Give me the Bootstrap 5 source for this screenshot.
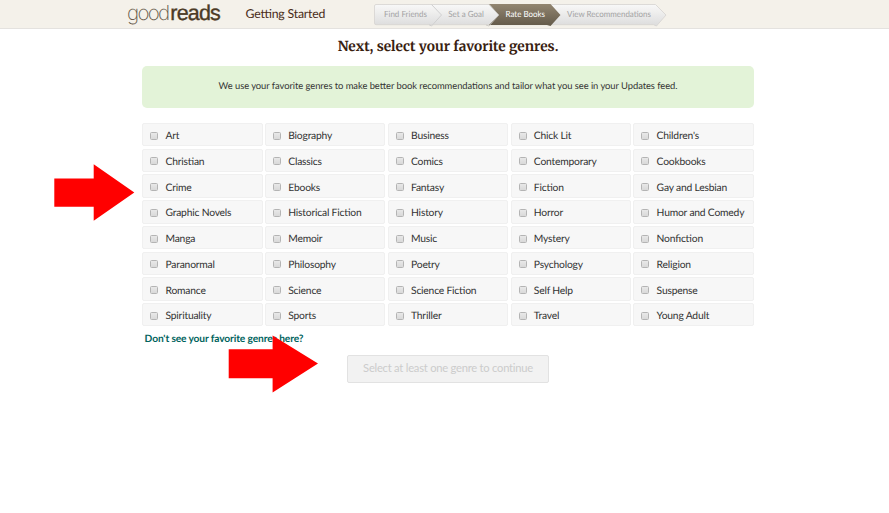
<!DOCTYPE html>
<html lang="en">
<head>
<meta charset="utf-8">
<title>Goodreads - Getting Started</title>
<meta name="viewport" content="width=device-width, initial-scale=1">
<link href="https://cdn.jsdelivr.net/npm/bootstrap@5.3.0/dist/css/bootstrap.min.css" rel="stylesheet">
<style>
body{font-family:Lato,"Liberation Sans",sans-serif;color:#333;font-size:10.3px;min-height:513px;overflow:hidden;text-rendering:geometricPrecision;font-feature-settings:"liga" 1}
.topbar{height:29px;background:#f4f1ea;border-bottom:1px solid #e4e2df;padding-left:127px}
.topbar svg{flex:none;display:block;opacity:.99}
.section-title{font-size:12.3px;line-height:28px;color:#4a2c18;width:118px;margin-left:18.5px;letter-spacing:-.2px}
.steps{margin-left:8.5px}
.wrap{width:611.5px;margin-left:142.3px}
.headline{font-family:Merriweather,"DejaVu Serif Condensed","DejaVu Serif",serif;font-weight:700;font-size:13.7px;line-height:20px;color:#382110;margin:8px 0 8.5px}
.notice{height:42px;background:#e3f3d8;border-radius:5px;font-size:9.4px;letter-spacing:-.05px;padding-top:1px}
.genres{display:grid;grid-template-columns:repeat(5,1fr);gap:2.3px 2.4px;margin-top:15.5px}
.genre{height:23.42px;background:#f7f7f7;border:1px solid #f0f0f0;border-radius:2px;padding-left:7px;cursor:pointer;white-space:nowrap;letter-spacing:-.2px}
.genre span{padding-top:4.6px}
.genre input{appearance:none;width:8px;height:8px;margin:2px 7.2px 0 0;border:1px solid #b4b4b4;border-radius:1.5px;background:linear-gradient(#e8e8e8,#d9d9d9);flex:none}
.more{font-size:10.2px;line-height:14px;color:#00635d;margin:5.5px 0 0 2.3px;font-weight:700;letter-spacing:-.12px}
.continue{width:202px;height:28px;background:#f2f2f2;border:1px solid #e2e2e2;border-radius:2px;color:#ccc;font-size:11.2px;padding:0;margin-top:9px;letter-spacing:-.24px}
.pointer{left:0;top:0;pointer-events:none}
</style>
</head>
<body class="position-relative bg-white">
<header class="topbar d-flex">
  <svg width="100" height="28" viewBox="0 0 100 28" role="img" aria-label="goodreads">
      <text x="0" y="20" font-family="Inter, 'Liberation Sans', sans-serif" font-size="20.5" font-weight="200" fill="#665a49" textLength="43" lengthAdjust="spacing">good</text>
      <text x="43.3" y="20" font-family="'Liberation Sans', sans-serif" font-size="21.5" fill="#4a3823" stroke="#4a3823" stroke-width=".35" textLength="50.500" lengthAdjust="spacing">reads</text>
  </svg>
  <div class="section-title text-nowrap">Getting Started</div>
  <svg class="steps" width="296" height="28" viewBox="372 0 296 28">
    <defs>
      <linearGradient id="pale" x1="0" y1="0" x2="0" y2="1"><stop offset="0" stop-color="#f9f9f9"/><stop offset="1" stop-color="#dcdcdc"/></linearGradient>
      <linearGradient id="active" x1="0" y1="0" x2="0" y2="1"><stop offset="0" stop-color="#91846f"/><stop offset="1" stop-color="#625949"/></linearGradient>
    </defs>
    <path d="M376 4.5H655.500L666 15 656.500 26 653.500 24.700H376Q374.500 24.700 374.500 23V6Q374.500 4.500 376 4.500Z" fill="url(#pale)" stroke="#d5d3d0" stroke-width=".8"/>
    <path d="M431.500 4.500L441.500 15 431.500 26 429 24.700" fill="none" stroke="#d0d0d0"/>
    <path d="M489 4H550.500L560.500 15 550.500 26 547 25H489L498.800 15Z" fill="url(#active)"/>
    <path d="M489 4.500L498.800 15 489 26 486 25" fill="none" stroke="#c8c5c0" stroke-width=".8"/>
    <g font-family="Lato, sans-serif" font-size="8.5" fill="#a3a3a3">
      <text x="384" y="17" textLength="43" lengthAdjust="spacingAndGlyphs">Find Friends</text>
      <text x="448.300" y="17" textLength="35.500" lengthAdjust="spacingAndGlyphs">Set a Goal</text>
      <text x="505.500" y="17" textLength="39.500" lengthAdjust="spacingAndGlyphs" fill="#fff">Rate Books</text>
      <text x="567" y="17" textLength="84" lengthAdjust="spacingAndGlyphs">View Recommendations</text>
    </g>
  </svg>
</header>
<main class="wrap">
  <h1 class="headline text-center text-nowrap">Next, select your favorite genres.</h1>
  <div class="notice d-flex align-items-center justify-content-center">We use your favorite genres to make better book recommendations and tailor what you see in your Updates feed.</div>
  <form>
    <div class="genres" id="genres"></div>
    <div class="more">Don't see your favorite genres here?</div>
    <button type="button" class="continue d-block mx-auto" disabled>Select at least one genre to continue</button>
  </form>
</main>
<svg class="pointer position-absolute" width="889" height="513" viewBox="0 0 889 513" aria-hidden="true">
  <g fill="#f00">
    <path d="M54.300 178.500H93.700V164.300L134.300 192.500 93.700 220.700V206.800H54.300Z"/>
    <path d="M228.700 349.200H272.600V335.500L318 363.500 272.600 392.500V378.200H228.700Z"/>
  </g>
</svg>
<script src="https://cdn.jsdelivr.net/npm/bootstrap@5.3.0/dist/js/bootstrap.bundle.min.js"></script>
<script>
const names = ["Art","Biography","Business","Chick Lit","Children's","Christian","Classics","Comics","Contemporary","Cookbooks","Crime","Ebooks","Fantasy","Fiction","Gay and Lesbian","Graphic Novels","Historical Fiction","History","Horror","Humor and Comedy","Manga","Memoir","Music","Mystery","Nonfiction","Paranormal","Philosophy","Poetry","Psychology","Religion","Romance","Science","Science Fiction","Self Help","Suspense","Spirituality","Sports","Thriller","Travel","Young Adult"];
document.getElementById("genres").innerHTML = names.map(n => `<label class="genre d-flex align-items-center"><input type="checkbox"><span>${n}</span></label>`).join("");
</script>
</body>
</html>
